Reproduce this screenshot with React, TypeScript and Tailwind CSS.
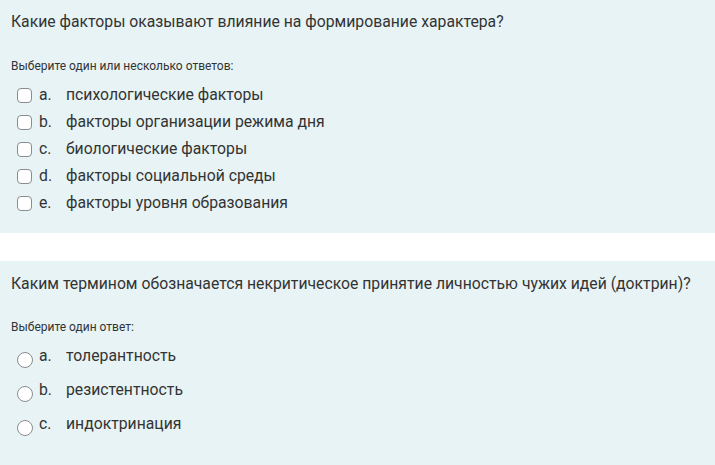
import React from "react";

const font = { fontFamily: "Roboto, 'Noto Sans', sans-serif" };

function CheckRow({ l, t }: { l: string; t: string }) {
  return (
    <div className="flex items-center h-[27px]">
      <span className="ml-[6px] mt-[1px] w-[15px] h-[15px] rounded-[4px] border border-[#8a8d90] bg-white shrink-0" />
      <span className="ml-[7px] w-[27px] text-[15.75px] text-[#333]">{l}</span>
      <span className="text-[15.75px] text-[#333]">{t}</span>
    </div>
  );
}

function RadioRow({ l, t }: { l: string; t: string }) {
  return (
    <div className="flex items-center h-[34px]">
      <span className="ml-[6px] mt-[8px] w-[16px] h-[16px] rounded-full border border-[#8a8d90] bg-white shrink-0" />
      <span className="ml-[6px] w-[27px] text-[15.75px] text-[#333]">{l}</span>
      <span className="text-[15.75px] text-[#333]">{t}</span>
    </div>
  );
}

export default function App() {
  return (
    <div className="w-[715px] h-[465px] bg-white overflow-hidden" style={font}>
      <div className="h-[233px] bg-[#e7f3f5] px-[11px] pt-[10px]">
        <div className="text-[15.75px] leading-[24px] text-[#333]">
          Какие факторы оказывают влияние на формирование характера?
        </div>
        <div className="mt-[23px] text-[12px] leading-[18px] text-[#333]">
          Выберите один или несколько ответов:
        </div>
        <div className="mt-[6px]">
          <CheckRow l="a." t="психологические факторы" />
          <CheckRow l="b." t="факторы организации режима дня" />
          <CheckRow l="c." t="биологические факторы" />
          <CheckRow l="d." t="факторы социальной среды" />
          <CheckRow l="e." t="факторы уровня образования" />
        </div>
      </div>
      <div className="mt-[28px] h-[204px] bg-[#e7f3f5] px-[11px] pt-[11px]">
        <div className="text-[15.75px] leading-[24px] text-[#333]">
          Каким термином обозначается некритическое принятие личностью чужих идей (доктрин)?
        </div>
        <div className="mt-[22px] text-[12px] leading-[18px] text-[#333]">
          Выберите один ответ:
        </div>
        <div className="mt-[3px]">
          <RadioRow l="a." t="толерантность" />
          <RadioRow l="b." t="резистентность" />
          <RadioRow l="c." t="индоктринация" />
        </div>
      </div>
    </div>
  );
}
